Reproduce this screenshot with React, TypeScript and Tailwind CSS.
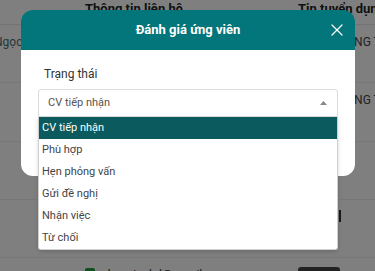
import React from "react";

const options = ["CV tiếp nhận", "Phù hợp", "Hẹn phỏng vấn", "Gửi đề nghị", "Nhận việc", "Từ chối"];

export default function App() {
  return (
    <div
      className="relative w-[375px] h-[271px] overflow-hidden bg-white"
      style={{ fontFamily: "Roboto, 'Liberation Sans', sans-serif" }}
    >
      {/* background page */}
      <div className="flex flex-col">
        <div className="h-[25px] flex items-start border-b border-[#e8e8e8] text-[13px] font-bold text-[#222] leading-[18px]">
          <div className="w-[85px] shrink-0" />
          <div className="w-[213px] shrink-0">Thông tin liên hệ</div>
          <div className="whitespace-nowrap">Tin tuyển dụng</div>
        </div>
        <div className="h-[58px] flex items-start border-b border-[#eee] text-[12px] pt-[8px] whitespace-nowrap">
          <div className="w-[338px] shrink-0 flex">
            <span className="ml-[-6px] text-[#4a6f75]">Ngọc</span>
          </div>
          <span className="text-[#444]">CÔNG TY</span>
        </div>
        <div className="h-[59px] flex items-start border-b border-[#eee] text-[12px] pt-[8px] whitespace-nowrap">
          <div className="w-[338px] shrink-0" />
          <span className="text-[#444]">CÔNG TY</span>
        </div>
        <div className="h-[58px] border-b border-[#eee]" />
        <div className="h-[58px] flex justify-end border-b border-[#eee]">
          <div className="mt-[10px] mr-[34px] w-[2px] h-[12px] bg-[#333]" />
        </div>
        <div className="h-[13px] flex items-start whitespace-nowrap">
          <div className="ml-[85px] mt-[10px] w-[10px] h-[10px] rounded-[2px] bg-[#1e9e3a] shrink-0" />
          <span className="ml-[6px] mt-[10px] text-[12px] leading-[14px] text-[#333] w-[197px] shrink-0">nhanvienkd@gmail.com</span>
          <div className="mt-[9px] w-[42px] h-[14px] rounded-[3px] bg-[#444] shrink-0" />
        </div>
      </div>

      {/* overlay */}
      <div className="absolute inset-0 bg-black/50" />

      {/* modal */}
      <div className="absolute left-[21px] top-[10px] w-[334px]">
        <div className="relative h-[40px] rounded-t-[12px] bg-[#03767b] flex items-center justify-center">
          <span className="text-white font-bold text-[13px]">Đánh giá ứng viên</span>
          <svg
            className="absolute right-[12px] top-[14px]"
            width="12"
            height="12"
            viewBox="0 0 12 12"
            fill="none"
            stroke="white"
            strokeWidth="1.2"
            strokeLinecap="round"
          >
            <path d="M1 1 L11 11 M11 1 L1 11" />
          </svg>
        </div>
        <div className="h-[126px] rounded-b-[12px] bg-white px-[17px] pt-[17px]">
          <div className="pl-[6px] text-[12px] leading-[14px] text-[#333]">Trạng thái</div>
          <div className="relative mt-[8px]">
            <div className="h-[28px] rounded-t-[3px] border border-[#dcdcdc] flex items-center justify-between pl-[9px] pr-[10px]">
              <span className="text-[11px] text-[#555]">CV tiếp nhận</span>
              <svg width="7" height="4" viewBox="0 0 7 4">
                <path d="M0 4 L3.5 0 L7 4 Z" fill="#888" />
              </svg>
            </div>
            <div className="absolute left-0 top-[28px] w-full bg-white border border-[#cfcfcf] border-t-0 rounded-b-[3px] shadow-[0_2px_4px_rgba(0,0,0,0.15)] flex flex-col">
              {options.map((o, i) => (
                <div
                  key={o}
                  className={
                    i === 0
                      ? "h-[22px] flex items-center pl-[3px] text-[11px] bg-[#0a5a5e] text-white"
                      : "h-[22px] flex items-center pl-[3px] text-[11px] text-[#444]"
                  }
                >
                  {o}
                </div>
              ))}
            </div>
          </div>
        </div>
      </div>
    </div>
  );
}
